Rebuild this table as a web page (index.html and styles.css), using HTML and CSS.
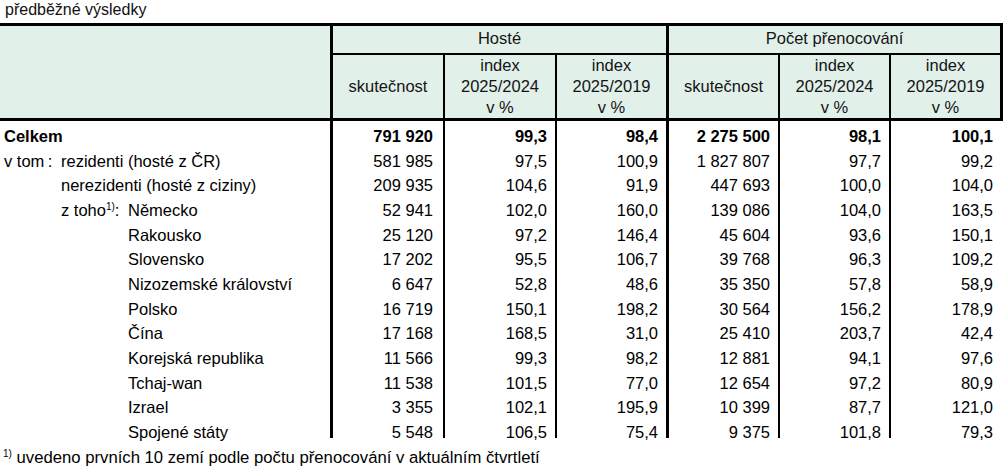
FILE: index.html
```html
<!DOCTYPE html>
<html lang="cs">
<head>
<meta charset="utf-8">
<title>Hosté a přenocování</title>
<link rel="stylesheet" href="styles.css">
</head>
<body>
<p class="title">předběžné výsledky</p>
<table class="data">
  <colgroup>
    <col class="w-label">
    <col class="w-a"><col class="w-a"><col class="w-a">
    <col class="w-b"><col class="w-b"><col class="w-a">
  </colgroup>
  <thead>
    <tr class="h1">
      <th rowspan="2" class="corner"></th>
      <th colspan="3" class="grp">Hosté</th>
      <th colspan="3" class="grp">Počet přenocování</th>
    </tr>
    <tr class="h2">
      <th class="sub">skutečnost</th>
      <th class="sub">index<br>2025/2024<br>v %</th>
      <th class="sub thick">index<br>2025/2019<br>v %</th>
      <th class="sub">skutečnost</th>
      <th class="sub">index<br>2025/2024<br>v %</th>
      <th class="sub thick">index<br>2025/2019<br>v %</th>
    </tr>
  </thead>
  <tbody>
    <tr class="first">
      <td class="label bold">Celkem</td>
      <td class="num c2 bold">791 920</td><td class="num bold">99,3</td><td class="num bold thick">98,4</td>
      <td class="num bold">2 275 500</td><td class="num bold">98,1</td><td class="num bold end">100,1</td>
    </tr>
    <tr>
      <td class="label"><span class="lead">v tom&#8201;:</span>rezidenti (hosté z ČR)</td>
      <td class="num c2">581 985</td><td class="num">97,5</td><td class="num thick">100,9</td>
      <td class="num">1 827 807</td><td class="num">97,7</td><td class="num end">99,2</td>
    </tr>
    <tr>
      <td class="label lvl1">nerezidenti (hosté z ciziny)</td>
      <td class="num c2">209 935</td><td class="num">104,6</td><td class="num thick">91,9</td>
      <td class="num">447 693</td><td class="num">100,0</td><td class="num end">104,0</td>
    </tr>
    <tr>
      <td class="label lvl1"><span class="lead2">z toho<sup>1)</sup>:</span>Německo</td>
      <td class="num c2">52 941</td><td class="num">102,0</td><td class="num thick">160,0</td>
      <td class="num">139 086</td><td class="num">104,0</td><td class="num end">163,5</td>
    </tr>
    <tr>
      <td class="label lvl2">Rakousko</td>
      <td class="num c2">25 120</td><td class="num">97,2</td><td class="num thick">146,4</td>
      <td class="num">45 604</td><td class="num">93,6</td><td class="num end">150,1</td>
    </tr>
    <tr>
      <td class="label lvl2">Slovensko</td>
      <td class="num c2">17 202</td><td class="num">95,5</td><td class="num thick">106,7</td>
      <td class="num">39 768</td><td class="num">96,3</td><td class="num end">109,2</td>
    </tr>
    <tr>
      <td class="label lvl2">Nizozemské království</td>
      <td class="num c2">6 647</td><td class="num">52,8</td><td class="num thick">48,6</td>
      <td class="num">35 350</td><td class="num">57,8</td><td class="num end">58,9</td>
    </tr>
    <tr>
      <td class="label lvl2">Polsko</td>
      <td class="num c2">16 719</td><td class="num">150,1</td><td class="num thick">198,2</td>
      <td class="num">30 564</td><td class="num">156,2</td><td class="num end">178,9</td>
    </tr>
    <tr>
      <td class="label lvl2">Čína</td>
      <td class="num c2">17 168</td><td class="num">168,5</td><td class="num thick">31,0</td>
      <td class="num">25 410</td><td class="num">203,7</td><td class="num end">42,4</td>
    </tr>
    <tr>
      <td class="label lvl2">Korejská republika</td>
      <td class="num c2">11 566</td><td class="num">99,3</td><td class="num thick">98,2</td>
      <td class="num">12 881</td><td class="num">94,1</td><td class="num end">97,6</td>
    </tr>
    <tr>
      <td class="label lvl2">Tchaj-wan</td>
      <td class="num c2">11 538</td><td class="num">101,5</td><td class="num thick">77,0</td>
      <td class="num">12 654</td><td class="num">97,2</td><td class="num end">80,9</td>
    </tr>
    <tr>
      <td class="label lvl2">Izrael</td>
      <td class="num c2">3 355</td><td class="num">102,1</td><td class="num thick">195,9</td>
      <td class="num">10 399</td><td class="num">87,7</td><td class="num end">121,0</td>
    </tr>
    <tr>
      <td class="label lvl2">Spojené státy</td>
      <td class="num c2">5 548</td><td class="num">106,5</td><td class="num thick">75,4</td>
      <td class="num">9 375</td><td class="num">101,8</td><td class="num end">79,3</td>
    </tr>
  </tbody>
</table>
<p class="note"><sup>1)</sup> uvedeno prvních 10 zemí podle počtu přenocování v aktuálním čtvrtletí</p>
</body>
</html>
```

FILE: styles.css
```css
html, body {
  margin: 0;
  padding: 0;
  background: #ffffff;
}

body {
  font-family: "Liberation Sans", Arial, sans-serif;
  font-size: 16.5px;
  color: #000000;
  width: 1004px;
  height: 472px;
  overflow: hidden;
}

.title {
  margin: 0;
  padding: 1px 0 0 5px;
  height: 22px;
  line-height: 18px;
  color: #111111;
  font-size: 16px;
}

.data {
  table-layout: fixed;
  border-collapse: separate;
  border-spacing: 0;
  width: 1003px;
  border-top: 3px solid #000000;
}

.w-label { width: 333px; }
.w-a { width: 112px; }
.w-b { width: 111px; }

th, td {
  box-sizing: border-box;
  padding: 0;
}

.data thead th {
  background: #e2f0ea;
  font-weight: normal;
  color: #141414;
  text-align: center;
  vertical-align: middle;
}

.h1 { height: 29px; }
.h2 { height: 66px; }

.corner {
  border-right: 3px solid #000000;
  border-bottom: 3px solid #000000;
}

.grp {
  border-right: 3px solid #000000;
  border-bottom: 2px solid #000000;
  line-height: 18px;
  padding-bottom: 4px;
}

.sub {
  border-right: 2px solid #000000;
  border-bottom: 3px solid #000000;
  line-height: 21px;
}

.sub.thick { border-right-width: 3px; }

.data tbody tr { height: 24.67px; }
.data tbody tr.first { height: 21px; }

.data tbody td {
  vertical-align: bottom;
  line-height: 12px;
  padding-bottom: 0;
  white-space: nowrap;
}

.label {
  border-right: 3px solid #000000;
  padding-left: 4px;
}

.label.lvl1 { padding-left: 61px; }
.label.lvl2 { padding-left: 128px; }

.lead {
  display: inline-block;
  width: 57px;
}

.lead2 {
  display: inline-block;
  width: 67px;
}

.num {
  text-align: right;
  padding-right: 8px;
  border-right: 2px solid #000000;
}

.num.c2 { padding-right: 10px; }
.num.thick { border-right-width: 3px; }
.num.end { border-right: 3px solid transparent; padding-right: 7px; }

.bold { font-weight: bold; }

sup {
  font-size: 10px;
  line-height: 0;
  vertical-align: 6px;
}

.note {
  margin: 11px 0 0 0;
  padding-left: 3px;
  line-height: 18px;
  font-size: 16.7px;
}
```
